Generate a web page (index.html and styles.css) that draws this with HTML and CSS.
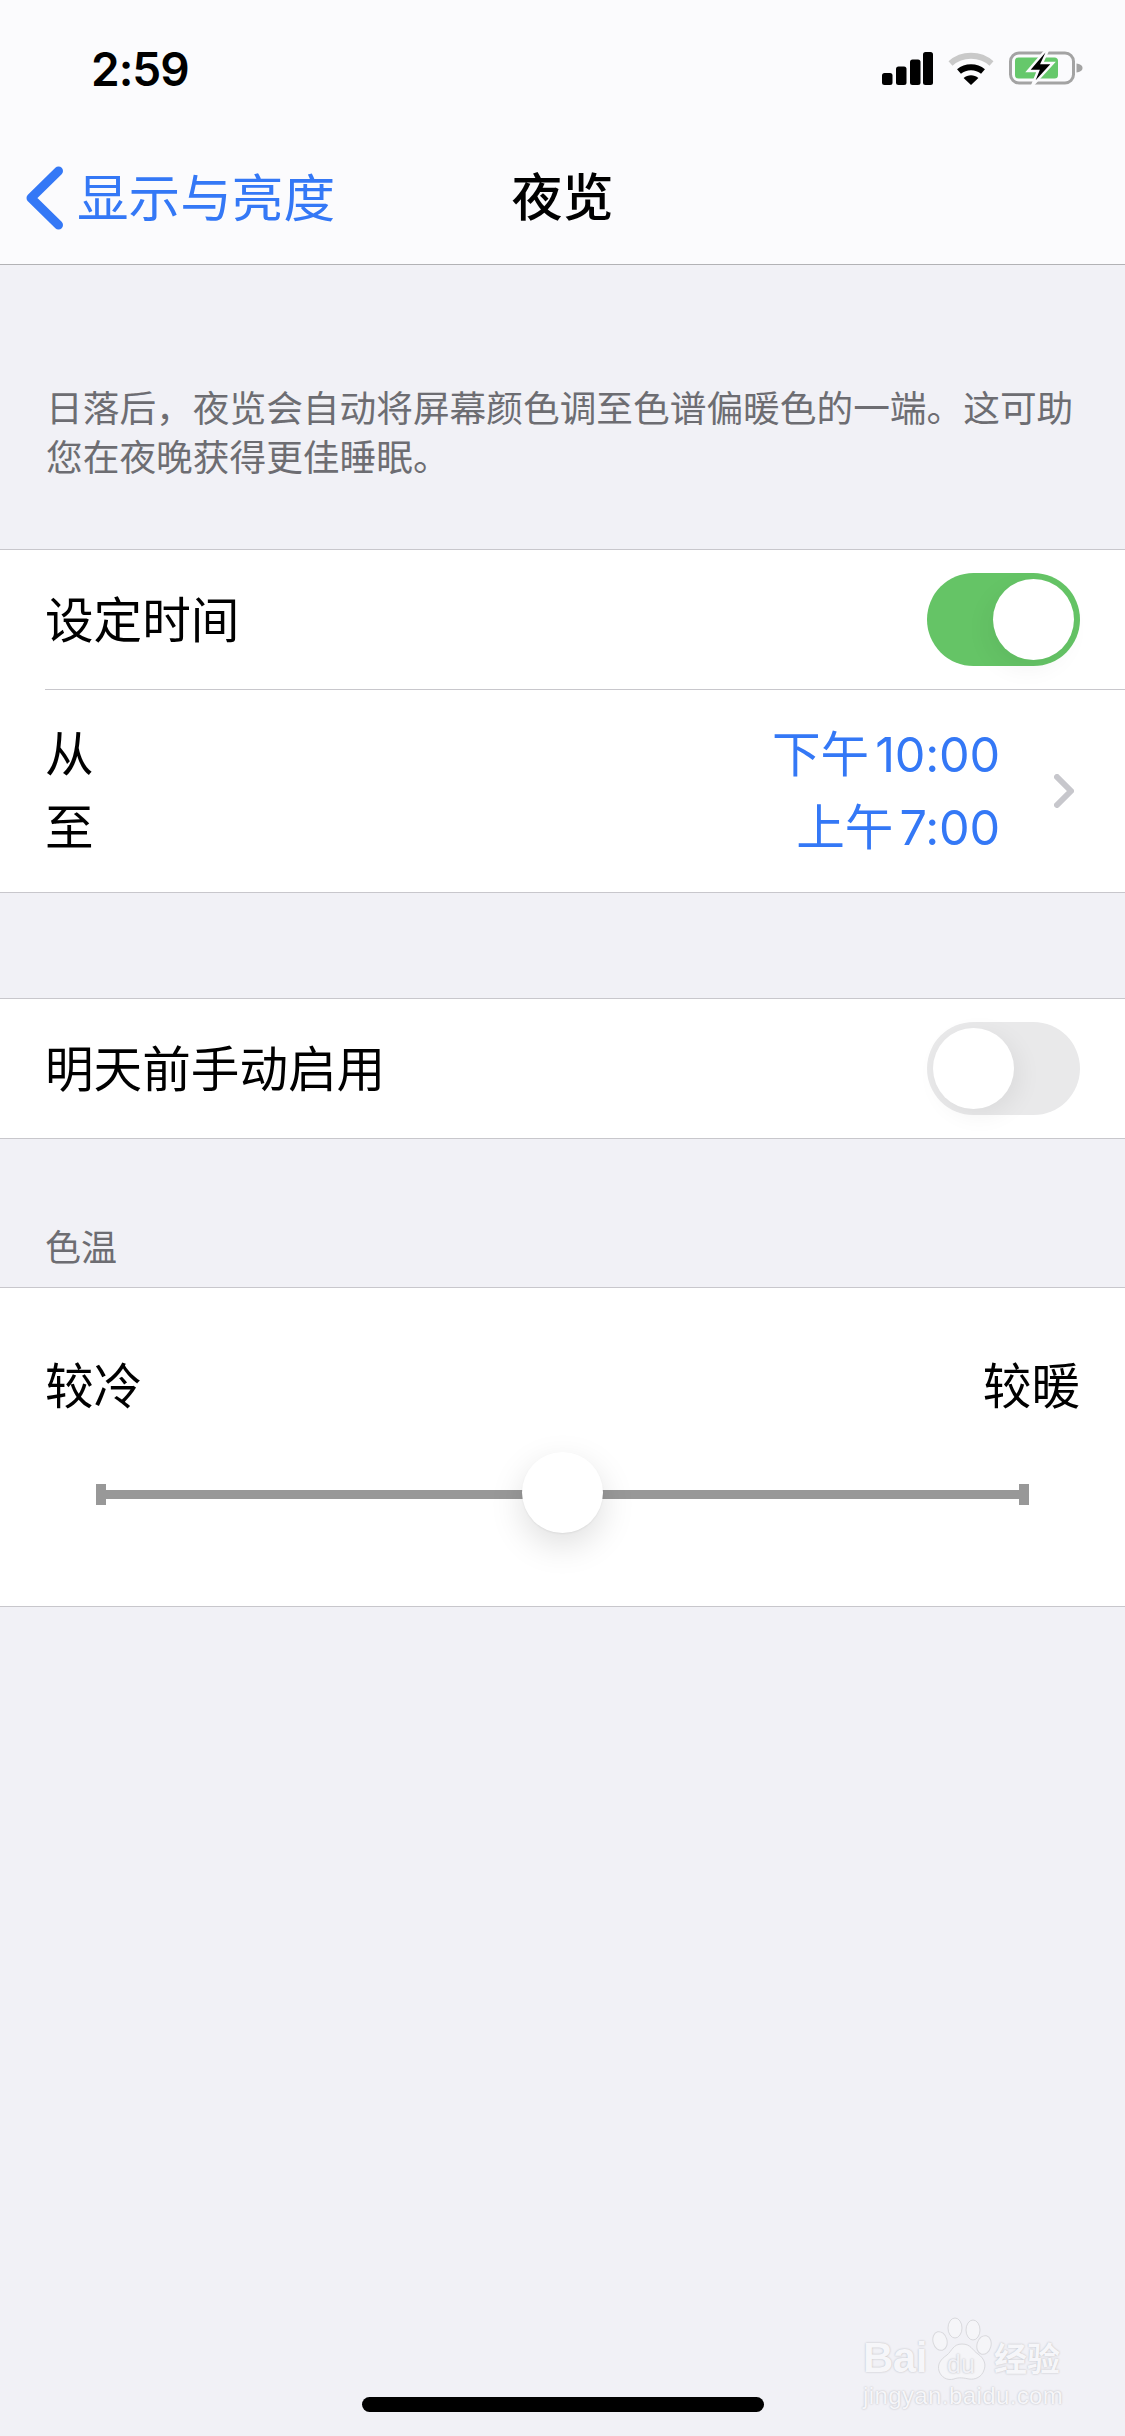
FILE: index.html
```html
<!DOCTYPE html>
<html lang="zh-CN">
<head>
<meta charset="utf-8">
<title>夜览</title>
<link rel="stylesheet" href="styles.css">
</head>
<body>
<div class="phone">
  <header class="top">
    <div class="status">
      <span class="clock">2:59</span>
      <div class="status-icons">
        <svg class="signal" width="51" height="33" viewBox="0 0 51 33"><rect x="0" y="21" width="10.5" height="12" rx="2.5"/><rect x="14" y="14.5" width="10.5" height="18.5" rx="2.5"/><rect x="28" y="7.5" width="10.5" height="25.5" rx="2.5"/><rect x="41" y="0" width="10" height="33" rx="2.5"/></svg>
        <svg class="wifi" width="46" height="33" viewBox="0 0 46 33"><path d="M2.5 11.5C14 1.2 32 1.2 43.5 11.5" fill="none" stroke="#c9c9c9" stroke-width="6"/><path d="M11 19.5C17.8 13.7 28.2 13.7 35 19.5" fill="none" stroke="#000" stroke-width="6"/><path d="M15.6 26L23 33l7.4-7C26 22.2 20 22.2 15.6 26z" fill="#000"/></svg>
        <svg class="battery" width="74" height="36" viewBox="0 0 74 36"><rect x="1.5" y="3" width="63" height="30" rx="8.5" fill="none" stroke="#a3a3a3" stroke-width="3"/><rect x="6" y="7.5" width="43" height="21" rx="3.5" fill="#66c86b"/><path d="M67.5 13.5c3.5.5 6 2 6 4.5s-2.500 4-6 4.500z" fill="#a3a3a3"/><path d="M37 0L19 21h10l-6 15 21-23H33l6-13z" fill="#000" stroke="#fbfbfd" stroke-width="2.5" stroke-linejoin="miter"/></svg>
      </div>
    </div>
    <nav class="nav">
      <div class="back">
        <svg class="back-icon" width="38" height="64" viewBox="0 0 38 64"><path d="M32.5 5L5 32l27.5 27" fill="none" stroke="#3478f6" stroke-width="9" stroke-linecap="round" stroke-linejoin="round"/></svg>
        <span class="back-label">显示与亮度</span>
      </div>
      <h1 class="title">夜览</h1>
    </nav>
  </header>

  <p class="intro">日落后，夜览会自动将屏幕颜色调至色谱偏暖色的一端。这可助您在夜晚获得更佳睡眠。</p>

  <section class="group">
    <div class="row row-switch">
      <span class="label">设定时间</span>
      <span class="switch switch-on"><span class="knob"></span></span>
    </div>
    <div class="row row-schedule">
      <div class="stack">
        <span class="label">从</span>
        <span class="label">至</span>
      </div>
      <div class="schedule-right">
        <div class="stack stack-end">
          <span class="value">下午 10:00</span>
          <span class="value">上午 7:00</span>
        </div>
        <svg class="chevron" width="20" height="34" viewBox="0 0 20 34"><path d="M3 3l14 14L3 31" fill="none" stroke="#c7c7cc" stroke-width="6" stroke-linecap="round" stroke-linejoin="round"/></svg>
      </div>
    </div>
  </section>

  <section class="group group-second">
    <div class="row row-switch">
      <span class="label">明天前手动启用</span>
      <span class="switch switch-off"><span class="knob"></span></span>
    </div>
  </section>

  <h2 class="section-head">色温</h2>

  <section class="group">
    <div class="temp">
      <div class="temp-labels">
        <span class="label">较冷</span>
        <span class="label">较暖</span>
      </div>
      <div class="slider">
        <span class="tick"></span>
        <span class="track"></span>
        <span class="tick"></span>
        <span class="slider-knob"></span>
      </div>
    </div>
  </section>

  <div class="watermark">
    <div class="wm-logo">
      <span class="wm-bai">Bai</span>
      <span class="wm-paw">
        <svg width="60" height="64" viewBox="0 0 60 64"><g fill="#f5f5f8" stroke="#d9d9dd" stroke-width="1"><ellipse cx="23" cy="11" rx="7" ry="10"/><ellipse cx="41" cy="13" rx="7" ry="10"/><ellipse cx="8" cy="24" rx="7" ry="9.5" transform="rotate(-15 8 24)"/><ellipse cx="52" cy="28" rx="7" ry="9.5" transform="rotate(15 52 28)"/><path d="M30 27c9 0 10 6 16 10 7 5 8 11 6 16-2 7-9 10-15 9-5-1-10-2-15 0-7 2-13-2-15-8-2-7 2-12 8-16 5-4 6-11 15-11z"/></g></svg>
        <span class="wm-du">du</span>
      </span>
      <span class="wm-cn">经验</span>
    </div>
    <span class="wm-url">jingyan.baidu.com</span>
  </div>

  <div class="home-indicator"></div>
</div>
</body>
</html>
```
FILE: styles.css
```css
* { box-sizing: border-box; }
html, body { margin: 0; padding: 0; }
body { width: 1125px; height: 2436px; overflow: hidden; }

.phone {
  position: relative;
  width: 1125px;
  height: 2436px;
  overflow: hidden;
  background: #f1f1f6;
  font-family: Inter, "Noto Sans CJK SC", sans-serif;
  color: #000;
}

.top {
  height: 265px;
  background: #fbfbfd;
  border-bottom: 1px solid #b2b2b5;
}

.status {
  height: 136px;
  padding: 0 42px 0 91px;
  display: flex;
  align-items: flex-start;
  justify-content: space-between;
}

.clock {
  margin-top: 41px;
  font-size: 46px;
  line-height: 56px;
  font-weight: 600;
  letter-spacing: -1px;
}

.status-icons {
  margin-top: 52px;
  display: flex;
  align-items: flex-start;
  gap: 15px;
}
.signal { fill: #000; }
.battery { margin-top: -2px; }

.nav {
  position: relative;
  height: 128px;
  display: flex;
  align-items: flex-start;
  justify-content: center;
}

.back {
  position: absolute;
  left: 26px;
  top: 30px;
  display: flex;
  align-items: center;
  gap: 13px;
}

.back-label {
  font-size: 51.6px;
  line-height: 64px;
  color: #3478f6;
}

.title {
  margin: 30px 0 0;
  font-size: 51px;
  line-height: 64px;
  font-weight: 500;
}

.intro {
  margin: 0;
  padding: 119px 40px 0 46px;
  height: 284px;
  font-size: 36.7px;
  line-height: 49px;
  color: #6d6d72;
}

.group {
  background: #fff;
  border-top: 1px solid #c8c7cc;
  border-bottom: 1px solid #c8c7cc;
}
.group-second { margin-top: 105px; }

.row {
  display: flex;
  align-items: center;
  justify-content: space-between;
  margin-left: 45px;
  padding-right: 45px;
}
.row-switch { height: 139px; }
.row-switch .label { margin-top: 2px; }
.row-schedule {
  height: 203px;
  border-top: 1px solid #c8c7cc;
}

.label {
  font-size: 48.6px;
  line-height: 64px;
}

.stack {
  display: flex;
  flex-direction: column;
  gap: 9px;
}
.stack-end { align-items: flex-end; }

.schedule-right {
  display: flex;
  align-items: center;
  gap: 54px;
}
.chevron { margin-right: 6px; }

.value {
  font-size: 48.6px;
  line-height: 64px;
  word-spacing: -7px;
  letter-spacing: -0.2px;
  color: #3478f6;
}

.switch {
  position: relative;
  display: block;
  width: 153px;
  height: 93px;
  border-radius: 47px;
}
.switch-on { background: #65c466; }
.switch-off { background: #e9e9ea; }
.knob {
  position: absolute;
  top: 6px;
  width: 81px;
  height: 81px;
  border-radius: 50%;
  background: #fff;
}
.switch-on .knob { right: 6px; box-shadow: -6px 9px 24px rgba(0, 0, 0, 0.05); }
.switch-off .knob { left: 6px; box-shadow: 6px 6px 24px rgba(0, 0, 0, 0.06); }

.section-head {
  margin: 0;
  padding: 84px 45px 0;
  height: 148px;
  font-size: 36px;
  line-height: 50px;
  font-weight: 400;
  color: #6d6d72;
}

.temp {
  height: 318px;
  padding: 0 45px;
}
.temp-labels {
  display: flex;
  justify-content: space-between;
  padding-top: 67px;
}
.slider {
  position: relative;
  display: flex;
  align-items: center;
  height: 21px;
  margin: 65px 51px 0;
}
.tick {
  flex: none;
  width: 10px;
  height: 21px;
  background: #989898;
}
.track {
  flex: 1;
  height: 9px;
  background: #989898;
}
.slider-knob {
  position: absolute;
  left: 426px;
  top: -32px;
  width: 81px;
  height: 81px;
  border-radius: 50%;
  background: #fff;
  box-shadow: 0 1px 2px rgba(0, 0, 0, 0.06), 0 12px 34px rgba(0, 0, 0, 0.13);
}

.watermark {
  position: absolute;
  left: 863px;
  top: 2317px;
  width: 205px;
  display: flex;
  flex-direction: column;
  color: #f6f6f9;
  text-shadow: 0 0 2px #b5b5b9;
}
.wm-logo {
  display: flex;
  align-items: flex-end;
  height: 64px;
}
.wm-bai {
  width: 69px;
  font-family: "Liberation Sans", sans-serif;
  font-weight: 700;
  font-size: 42px;
  line-height: 50px;
  height: 48px;
  letter-spacing: -0.5px;
}
.wm-paw {
  position: relative;
  display: block;
  width: 60px;
  height: 64px;
}
.wm-paw svg { display: block; }
.wm-du {
  position: absolute;
  left: 15px;
  top: 33px;
  font-family: "Liberation Sans", sans-serif;
  font-size: 25px;
  line-height: 28px;
  color: #f1f1f6;
}
.wm-cn {
  margin-left: 2px;
  font-size: 33px;
  line-height: 44px;
  font-weight: 700;
}
.wm-url {
  font-family: "Liberation Sans", sans-serif;
  font-size: 24px;
  line-height: 30px;
  letter-spacing: 0.4px;
}

.home-indicator {
  position: absolute;
  left: 362px;
  top: 2397px;
  width: 402px;
  height: 15px;
  border-radius: 8px;
  background: #000;
}
```
